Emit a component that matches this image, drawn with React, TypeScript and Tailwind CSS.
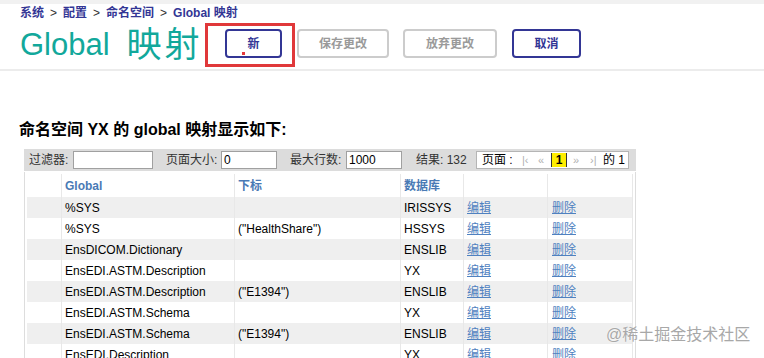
import React from "react";

const rows: [string, string, string][] = [
  ["%SYS", "", "IRISSYS"],
  ["%SYS", '("HealthShare")', "HSSYS"],
  ["EnsDICOM.Dictionary", "", "ENSLIB"],
  ["EnsEDI.ASTM.Description", "", "YX"],
  ["EnsEDI.ASTM.Description", '("E1394")', "ENSLIB"],
  ["EnsEDI.ASTM.Schema", "", "YX"],
  ["EnsEDI.ASTM.Schema", '("E1394")', "ENSLIB"],
  ["EnsEDI.Description", "", "YX"],
  ["EnsEDI.Description", '("E1394")', "ENSLIB"],
];

function Sep() {
  return <span className="px-[6px] font-normal text-[#333]">&gt;</span>;
}

export default function App() {
  return (
    <div className="relative h-[358px] w-[764px] overflow-hidden bg-white font-['Liberation_Sans','Noto_Sans_CJK_SC',sans-serif] text-black">
      <div className="h-[4px] bg-[#f1f1f1]" />
      {/* breadcrumb */}
      <div className="flex h-[18px] items-center pl-[20px] text-[12px] font-bold leading-[18px] text-[#333695]">
        <span>系统</span>
        <Sep />
        <span>配置</span>
        <Sep />
        <span>命名空间</span>
        <Sep />
        <span>Global 映射</span>
      </div>
      {/* title + buttons */}
      <div className="flex h-[46px] items-start">
        <div className="flex h-[46px] w-[225px] items-center pl-[20px] text-[#12a89b]">
          <span className="text-[31px] leading-[40px]">Global</span>
          <span className="ml-[17px] text-[35px] leading-[40px] tracking-[3px]">映射</span>
        </div>
        <div className="relative mt-[7px]">
          <button className="flex h-[29px] w-[57px] items-center justify-center rounded-[4px] border-2 border-[#333695] bg-white text-[12px] font-bold text-[#333695]">
            新
          </button>
          <div className="absolute left-[17px] top-[23px] h-[3px] w-[3px] bg-[#e5383b]" />
          <div className="absolute left-[-20px] top-[-6px] h-[44px] w-[90px] border-[3px] border-[#e0383a]" />
        </div>
        <button className="ml-[15px] mt-[7px] flex h-[29px] w-[92px] items-center justify-center rounded-[4px] border-2 border-[#cccccc] bg-white text-[12px] font-bold text-[#9a9a9a]">
          保存更改
        </button>
        <button className="ml-[14px] mt-[7px] flex h-[29px] w-[94px] items-center justify-center rounded-[4px] border-2 border-[#cccccc] bg-white text-[12px] font-bold text-[#9a9a9a]">
          放弃更改
        </button>
        <button className="ml-[15px] mt-[7px] flex h-[29px] w-[69px] items-center justify-center rounded-[4px] border-2 border-[#333695] bg-white text-[12px] font-bold text-[#333695]">
          取消
        </button>
      </div>
      <div className="mt-[1px] h-[2px] bg-[#ececec]" />
      {/* heading */}
      <div className="mt-[49px] pl-[19px] text-[16px] font-bold leading-[20px]">
        命名空间 YX 的 global 映射显示如下:
      </div>
      {/* table block */}
      <div className="ml-[24px] mt-[9px] w-[612px]">
        <div className="flex h-[22px] items-center bg-[#dcdcdc] pl-[5px] text-[12px] text-[#333]">
          <span className="w-[44px]">过滤器:</span>
          <div className="h-[18px] w-[80px] border border-[#a0a0a0] bg-white" />
          <span className="ml-[13px] w-[55px]">页面大小:</span>
          <div className="flex h-[18px] w-[56px] items-center border border-[#a0a0a0] bg-white pl-[2px] text-black">0</div>
          <span className="ml-[13px] w-[56px]">最大行数:</span>
          <div className="flex h-[18px] w-[56px] items-center border border-[#a0a0a0] bg-white pl-[2px] text-black">1000</div>
          <span className="ml-[14px] w-[60px]">结果: 132</span>
          <div className="flex h-[18px] w-[153px] items-center border border-[#b5b5b5] bg-white pl-[5px] text-black">
            <span className="w-[40px]">页面 :</span>
            <span className="w-[16px] text-[11px] text-[#b0b0b0]">|‹</span>
            <span className="w-[13px] text-[11px] text-[#b0b0b0]">«</span>
            <span className="flex h-[14px] w-[16px] items-center justify-center border-x border-[#333] bg-[#ffee00] font-bold">1</span>
            <span className="ml-[6px] w-[17px] text-[11px] text-[#b0b0b0]">»</span>
            <span className="w-[13px] text-[11px] text-[#b0b0b0]">›|</span>
            <span>的 1</span>
          </div>
        </div>
        <div className="mt-[1px] border-x border-[#dddddd] px-[2px]">
          <div className="grid h-[25px] grid-cols-[34px_173px_166px_63px_84px_86px] bg-white pt-[2px] text-[12px] font-bold text-[#4a7ab5]">
            <div />
            <div className="flex items-center border-l border-[#e8e8e8] pl-[3px]">Global</div>
            <div className="flex items-center border-l border-[#e8e8e8] pl-[3px]">下标</div>
            <div className="flex items-center border-l border-[#e8e8e8] pl-[3px]">数据库</div>
            <div className="border-l border-[#e8e8e8]" />
            <div className="border-x border-[#e8e8e8]" />
          </div>
          {rows.map((r, i) => (
            <div
              key={i}
              className={`grid h-[21px] grid-cols-[34px_173px_166px_63px_84px_86px] text-[12px] leading-[21px] ${
                i % 2 === 0 ? "bg-[#efefef]" : "bg-white"
              }`}
            >
              <div />
              <div className="border-l border-[#e8e8e8] pl-[3px] pt-[1px]">{r[0]}</div>
              <div className="border-l border-[#e8e8e8] pl-[3px] pt-[1px]">{r[1]}</div>
              <div className="border-l border-[#e8e8e8] pl-[3px] pt-[1px]">{r[2]}</div>
              <div className="border-l border-[#e8e8e8] pl-[3px] pt-[1px]">
                <span className="text-[#4f81c0] underline">编辑</span>
              </div>
              <div className="border-x border-[#e8e8e8] pl-[4px] pt-[1px]">
                <span className="text-[#4f81c0] underline">删除</span>
              </div>
            </div>
          ))}
        </div>
      </div>
      {/* watermark */}
      <div className="absolute left-[606px] top-[323px] text-[16px] leading-[24px] text-[#a8a8a8] [text-shadow:0_0_2px_white]">
        @稀土掘金技术社区
      </div>
    </div>
  );
}
